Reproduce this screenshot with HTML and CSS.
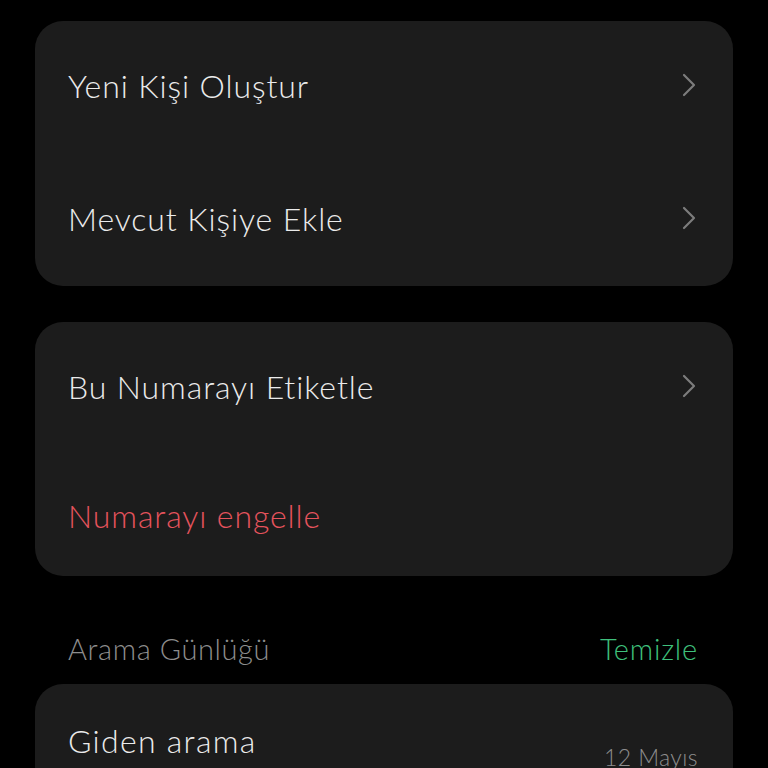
FILE: index.html
```html
<!DOCTYPE html>
<html lang="tr">
<head>
<meta charset="utf-8">
<link rel="stylesheet" href="styles.css">
</head>
<body>
<div class="page">
  <div class="card card-a">
    <div class="row">
      <span class="label">Yeni Kişi Oluştur</span>
      <svg class="chev" viewBox="0 0 16 26" width="16" height="26"><path d="M3 3 L13 13 L3 23" fill="none" stroke="#7c7c7c" stroke-width="2.2" stroke-linecap="round" stroke-linejoin="round"/></svg>
    </div>
    <div class="row">
      <span class="label">Mevcut Kişiye Ekle</span>
      <svg class="chev" viewBox="0 0 16 26" width="16" height="26"><path d="M3 3 L13 13 L3 23" fill="none" stroke="#7c7c7c" stroke-width="2.2" stroke-linecap="round" stroke-linejoin="round"/></svg>
    </div>
  </div>
  <div class="card card-b">
    <div class="row">
      <span class="label">Bu Numarayı Etiketle</span>
      <svg class="chev" viewBox="0 0 16 26" width="16" height="26"><path d="M3 3 L13 13 L3 23" fill="none" stroke="#7c7c7c" stroke-width="2.2" stroke-linecap="round" stroke-linejoin="round"/></svg>
    </div>
    <div class="row">
      <span class="label danger">Numarayı engelle</span>
    </div>
  </div>
  <div class="section-head">
    <span class="section-title">Arama Günlüğü</span>
    <span class="section-action">Temizle</span>
  </div>
  <div class="card card-c">
    <div class="log-row">
      <span class="label log-label">Giden arama</span>
      <span class="date">12 Mayıs</span>
    </div>
  </div>
</div>
</body>
</html>
```

FILE: styles.css
```css
html, body {
  margin: 0;
  padding: 0;
  background: #000;
  height: 100%;
  overflow: hidden;
}
body {
  font-family: Lato, "Noto Sans", "DejaVu Sans", sans-serif;
  font-weight: 300;
  color: #e8e8e8;
}
.page {
  padding: 21px 35px 0 35px;
  display: flex;
  flex-direction: column;
}
.card {
  background: #1c1c1c;
  border-radius: 28px;
  display: flex;
  flex-direction: column;
}
.card-a {
  height: 265px;
  box-sizing: border-box;
  padding: 16px 0 20px;
  gap: 37px;
}
.card-b {
  margin-top: 36px;
  height: 254px;
  box-sizing: border-box;
  padding: 16px 0 13px;
  gap: 33px;
}
.row {
  height: 96px;
  display: flex;
  align-items: center;
  justify-content: space-between;
  padding: 0 36px 0 33px;
}
.label {
  font-size: 32px;
  letter-spacing: 0.9px;
  color: #ebebeb;
}
.log-label {
  letter-spacing: 1.3px;
}
.danger {
  color: #e5535c;
}
.chev {
  display: block;
}
.section-head {
  height: 108px;
  box-sizing: border-box;
  display: flex;
  align-items: flex-end;
  justify-content: space-between;
  padding: 0 35px 18px 33px;
}
.section-title {
  font-size: 29px;
  letter-spacing: 0.6px;
  color: #8d8d8d;
}
.section-action {
  font-size: 29px;
  letter-spacing: 0.8px;
  color: #3fc07c;
}
.card-c {
  height: 120px;
}
.log-row {
  display: flex;
  justify-content: space-between;
  align-items: flex-start;
  padding: 37px 35px 0 33px;
}
.date {
  font-size: 23px;
  letter-spacing: 0.4px;
  color: #8d8d8d;
  margin-top: 22px;
}
```
